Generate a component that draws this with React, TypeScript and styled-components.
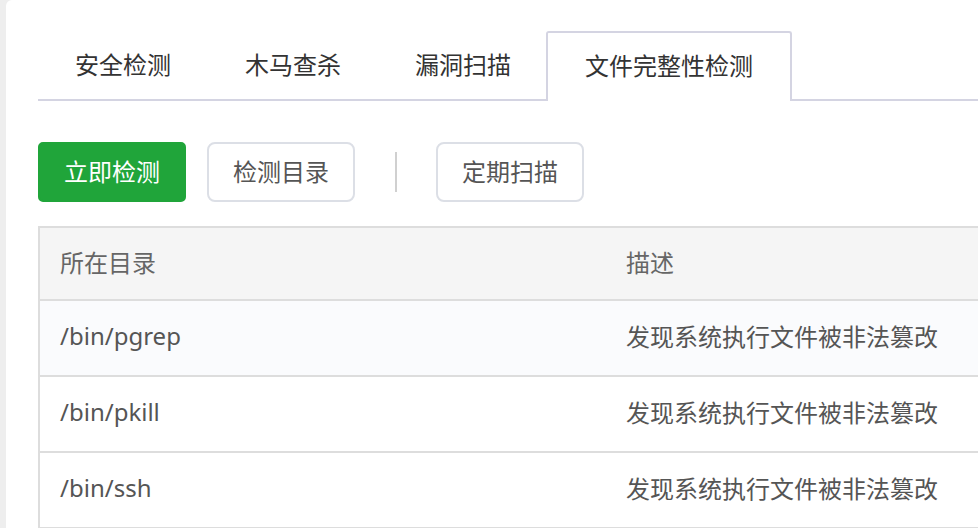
import React from 'react'
import styled, { createGlobalStyle } from 'styled-components'

const GlobalStyle = createGlobalStyle`
    html, body {
        margin: 0;
        padding: 0;
        overflow: hidden;
        background: #eeeeee;
        font-family: "Noto Sans", "Noto Sans CJK SC", sans-serif;
    }
`

const tabs = ['安全检测', '木马查杀', '漏洞扫描', '文件完整性检测']

const rows = [
    { path: '/bin/pgrep', desc: '发现系统执行文件被非法篡改' },
    { path: '/bin/pkill', desc: '发现系统执行文件被非法篡改' },
    { path: '/bin/ssh', desc: '发现系统执行文件被非法篡改' },
]

const App = () => {
    return (
        <>
        <GlobalStyle />
        <Page>
            <Card>
                <TabBar>
                    {tabs.map((t, i) => (
                        <Tab key={t} active={i === 3}>{t}</Tab>
                    ))}
                </TabBar>
                <Toolbar>
                    <Button primary>立即检测</Button>
                    <Button>检测目录</Button>
                    <Divider />
                    <Button>定期扫描</Button>
                </Toolbar>
                <Table>
                    <HeadRow>
                        <Cell>所在目录</Cell>
                        <Cell>描述</Cell>
                    </HeadRow>
                    {rows.map((r, i) => (
                        <Row key={r.path} hover={i === 0}>
                            <Cell>{r.path}</Cell>
                            <Cell>{r.desc}</Cell>
                        </Row>
                    ))}
                </Table>
            </Card>
        </Page>
        </>
    )
}

export default App

const Page = styled.div`
    padding-left: 6px;
    height: 528px;
`

const Card = styled.div`
    width: 1200px;
    height: 600px;
    background: #fff;
    border-top-left-radius: 6px;
    padding: 31px 0 0 32px;
    box-sizing: border-box;
`

const TabBar = styled.div`
    display: flex;
    border-bottom: 2px solid #d4d4e2;
    height: 68px;
`

const Tab = styled.div<{ active?: boolean }>`
    display: flex;
    align-items: center;
    padding: 0 ${p => (p.active ? '37px' : '35px')} 5px;
    box-sizing: border-box;
    font-size: 24px;
    color: #333;
    border: 2px solid ${p => (p.active ? '#d4d4e2' : 'transparent')};
    border-bottom: none;
    border-radius: 3px 3px 0 0;
    background: #fff;
    height: ${p => (p.active ? '70px' : '68px')};
    margin-left: ${p => (p.active ? '-2px' : '0')};
`

const Toolbar = styled.div`
    display: flex;
    align-items: center;
    margin-top: 41px;
`

const Button = styled.div<{ primary?: boolean }>`
    display: flex;
    align-items: center;
    justify-content: center;
    width: 148px;
    height: 60px;
    padding-bottom: 4px;
    box-sizing: border-box;
    font-size: 24px;
    border-radius: ${p => (p.primary ? '5px' : '8px')};
    background: ${p => (p.primary ? '#20a53a' : '#fff')};
    color: ${p => (p.primary ? '#fff' : '#555')};
    border: 2px solid ${p => (p.primary ? '#20a53a' : '#dcdfe6')};
    margin-right: 21px;
`

const Divider = styled.div`
    width: 2px;
    height: 40px;
    background: #d0d0d0;
    margin: 0 39px 0 19px;
`

const Table = styled.div`
    margin-top: 24px;
    border-left: 2px solid #dddddd;
    border-top: 2px solid #dddddd;
    width: 1160px;
`

const HeadRow = styled.div`
    display: grid;
    grid-template-columns: 566px 1fr;
    height: 71px;
    align-items: center;
    background: #f5f5f5;
    border-bottom: 2px solid #dddddd;
    color: #666;
`

const Row = styled.div<{ hover?: boolean }>`
    display: grid;
    grid-template-columns: 566px 1fr;
    height: 74px;
    align-items: center;
    background: ${p => (p.hover ? '#fafbfd' : '#fff')};
    border-bottom: 2px solid #dddddd;
    color: #555;
`

const Cell = styled.div`
    font-size: 24px;
    padding: 0 0 5px 20px;
`
